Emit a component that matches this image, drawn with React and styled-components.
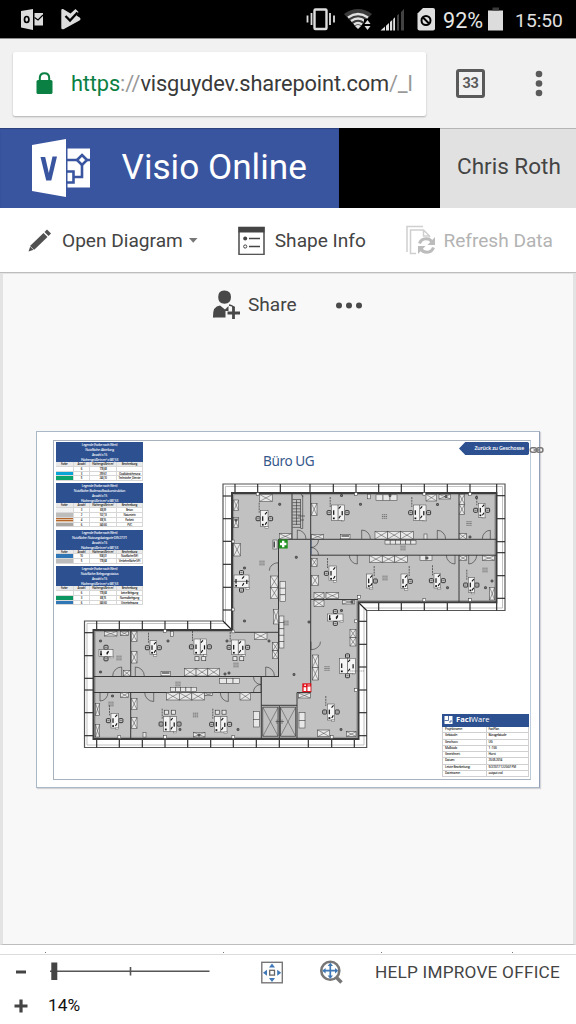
import React from 'react';
import styled, { createGlobalStyle } from 'styled-components';

const Global = createGlobalStyle`
  * { box-sizing: border-box; }
  body { margin: 0; background: #fff; overflow: hidden; }
`;

const Screen = styled.div`
  width: 576px;
  height: 1024px;
  display: flex;
  flex-direction: column;
  overflow: hidden;
  font-family: Roboto, "Liberation Sans", sans-serif;
  background: #fff;
`;

const Label = styled.span`
  font-size: ${(p) => p.$size}px;
  line-height: 1;
  letter-spacing: ${(p) => p.$track || 0}px;
  color: ${(p) => p.$color || '#444'};
  margin-left: ${(p) => p.$gap || 0}px;
  padding-top: ${(p) => p.$drop || 0}px;
  white-space: nowrap;
`;

const Icon = styled.svg`
  display: block;
  flex: none;
  margin-left: ${(p) => p.$gap || 0}px;
`;

const StatusBar = styled.header`
  height: 38px;
  flex: none;
  background: #000;
  display: flex;
  align-items: center;
  padding-left: 20px;
`;

const BrowserBar = styled.div`
  height: 90px;
  flex: none;
  background: #f1f1f1;
  border-top: 1px solid #8d8d8d;
  display: flex;
  align-items: center;
  padding: 0 0 0 13px;
`;

const Address = styled.div`
  width: 413px;
  height: 64px;
  background: #fff;
  border-radius: 2px;
  box-shadow: 0 1px 2px rgba(0, 0, 0, 0.28);
  display: flex;
  align-items: center;
  padding-left: 23px;
`;

const Url = styled.span`
  font-size: 21.8px;
  line-height: 1;
  letter-spacing: -0.15px;
  margin-left: 18px;
  color: #3a3a3a;
  white-space: nowrap;
  b { font-weight: 400; color: #0b8043; }
  i { font-style: normal; color: #999; }
`;

const Tabs = styled.div`
  width: 29px;
  height: 29px;
  margin-left: 30px;
  border: 3px solid #5a5a5a;
  border-radius: 3px;
  display: flex;
  align-items: center;
  justify-content: center;
  font-size: 14.5px;
  font-weight: 700;
  letter-spacing: -0.4px;
  color: #5a5a5a;
`;

const AppBar = styled.div`
  height: 80px;
  flex: none;
  display: flex;
`;

const Brand = styled.div`
  width: 339px;
  background: #3955a0;
  box-shadow: inset 0 1px 1px #2b417c;
  display: flex;
  align-items: center;
  padding: 0 0 0 32px;
`;

const Redacted = styled.div`
  width: 101px;
  background: #000;
`;

const User = styled.div`
  flex: 1;
  background: #e1e1e1;
  box-shadow: inset 0 1px 0 #b4b4b4;
  display: flex;
  align-items: center;
  padding: 0 0 4px 17px;
`;

const CommandBar = styled.nav`
  height: 65px;
  flex: none;
  background: #fff;
  border-bottom: 1px solid #bdbdbd;
  display: flex;
  align-items: center;
  padding-left: 28px;
`;

const Canvas = styled.main`
  height: 672px;
  flex: none;
  background: #f8f8f8;
  border: solid #e3e3e3;
  border-width: 1px 3px;
  border-bottom: 1px solid #bdbdbd;
  display: flex;
  flex-direction: column;
`;

const ShareRow = styled.div`
  height: 62px;
  flex: none;
  display: flex;
  align-items: center;
  padding-left: 209px;
`;

const Paper = styled.section`
  position: relative;
  width: 504px;
  height: 357px;
  flex: none;
  margin: 95px 0 0 33px;
  background: #fff;
  border: 1px solid #a9b7c6;
  border-right-color: #8fa0b8;
  box-shadow: 1px 1px 1px #d4d4d8;
  padding: 8px 8px 7px 16px;
`;

const Frame = styled.div`
  height: 100%;
  border: 1px solid #a7b2bd;
  border-right-color: #bccbdd;
  display: flex;
  justify-content: space-between;
  padding: 1px 1px 2px 2px;
`;

const Plan = styled.svg`
  position: absolute;
  left: -1px;
  top: -1px;
  overflow: visible;
`;

const PlanTitle = styled.h1`
  position: absolute;
  left: 226px;
  top: 20px;
  margin: 0;
  font: 400 13.6px/18px "Noto Sans", "Open Sans", sans-serif;
  letter-spacing: -0.4px;
  color: #35588c;
  white-space: nowrap;
`;

const Legends = styled.div`
  display: flex;
  flex-direction: column;
  gap: 2.2px;
  width: 87px;
  font-family: "Open Sans", sans-serif;
`;

const LegendHead = styled.div`
  background: #2d5190;
  color: #f0f4fb;
  height: 20px;
  font-size: 3.3px;
  font-weight: 600;
  letter-spacing: -0.28px;
  line-height: 5px;
  text-align: center;
  white-space: nowrap;
`;

const LegendRow = styled.div`
  display: grid;
  grid-template-columns: 17.5px 16.7px 26.7px 1fr;
  height: 4.8px;
  font-size: 2.9px;
  font-weight: 600;
  letter-spacing: -0.3px;
  line-height: 4.4px;
  text-align: center;
  color: #222;
  background: ${(p) => (p.$head ? '#e9e9e9' : '#fff')};
  border-bottom: 0.5px solid #d7d7d7;
  span { border-right: 0.5px solid #d7d7d7; white-space: nowrap; overflow: hidden; }
`;

const Swatch = styled.span`
  background: ${(p) => p.$fill || '#fff'};
`;

const RightCol = styled.div`
  display: flex;
  flex-direction: column;
  justify-content: space-between;
  align-items: flex-end;
`;

const BackLink = styled.div`
  width: 70px;
  height: 13px;
  background: #2d5190;
  color: #fff;
  clip-path: polygon(0 50%, 9% 0, 98% 0, 100% 8%, 100% 92%, 98% 100%, 9% 100%);
  font: 600 5.3px/13px "Open Sans", sans-serif;
  letter-spacing: -0.2px;
  text-align: right;
  padding-right: 5px;
`;

const InfoBlock = styled.div`
  width: 87px;
  font-family: "Open Sans", sans-serif;
`;

const InfoHead = styled.div`
  height: 12.8px;
  background: #2d5190;
  color: #fff;
  display: flex;
  align-items: center;
  padding: 0 0 1px 2px;
  font-size: 7.6px;
  line-height: 1;
  b { margin-left: 3px; }
`;

const InfoRow = styled.div`
  display: grid;
  grid-template-columns: 1fr 1fr;
  height: 6.25px;
  border: 0.5px solid #d0d0d0;
  border-top: 0;
  font-size: 3.1px;
  font-weight: 600;
  letter-spacing: -0.22px;
  line-height: 5.6px;
  color: #222;
  span { padding-left: 2px; white-space: nowrap; }
  span + span { border-left: 0.5px solid #d0d0d0; }
`;

const RulerStrip = styled.div`
  height: 10px;
  flex: none;
  border-bottom: 1px solid #dcdcdc;
  display: flex;
  align-items: flex-end;
  padding-bottom: 1px;
`;

const Mark = styled.i`
  width: 1px;
  height: 1px;
  background: #777;
  margin-left: ${(p) => p.$gap}px;
`;

const Footer = styled.footer`
  flex: 1;
  display: flex;
  flex-direction: column;
`;

const FooterRow = styled.div`
  height: ${(p) => p.$h}px;
  display: flex;
  align-items: center;
  padding-left: 14px;
`;

/* ---------- floor plan ---------- */

const range = (n) => Array.from({ length: n }, (_, i) => i);

const Cabinet = ({ b: [x, y, w, h, n = 1, plain = 0] }) => {
  const vertical = h > w;
  const cw = vertical ? w : w / n;
  const ch = vertical ? h / n : h;
  return range(n).map((i) => {
    const cx = vertical ? x : x + i * cw;
    const cy = vertical ? y + i * ch : y;
    return (
      <g key={i}>
        <rect x={cx} y={cy} width={cw} height={ch} fill="#e8e8e8" stroke="#444" strokeWidth=".55" />
        {!plain && (
          <path d={`M${cx} ${cy}l${cw} ${ch}M${cx + cw} ${cy}l${-cw} ${ch}`} stroke="#444" strokeWidth=".5" />
        )}
      </g>
    );
  });
};

const Chair = ({ x, y }) => (
  <g>
    <rect x={x - 2} y={y - 2} width="4" height="4" rx=".8" fill="#ccc" stroke="#222" strokeWidth=".9" />
    <path d={`M${x - 1} ${y}h2`} stroke="#333" strokeWidth=".6" />
  </g>
);

const Desk = ({ d: [x, y, w, h, chairs] }) => {
  const cx = x + w / 2;
  const cy = y + h / 2;
  const wide = w > 10 && h > 10;
  return (
    <g>
      {chairs.includes('L') && <Chair x={x - 2.6} y={cy} />}
      {chairs.includes('R') && <Chair x={x + w + 2.6} y={cy} />}
      {chairs.includes('T') && <Chair x={cx} y={y - 2.4} />}
      {chairs.includes('B') && <Chair x={cx} y={y + h + 2.4} />}
      {chairs.includes('b') && [-3.4, 3.4].map((o) => (
        <rect key={o} x={cx + o - 2} y={y + h + 2} width="4" height="4" fill="#e8e8e8" stroke="#333" strokeWidth=".6" />
      ))}
      {chairs.includes('t') && [-3.4, 3.4].map((o) => (
        <rect key={o} x={cx + o - 2} y={y - 6.5} width="4" height="4" fill="#e8e8e8" stroke="#333" strokeWidth=".6" />
      ))}
      {(chairs.includes('L') || chairs.includes('R')) && (
        <path
          d={`M${chairs.includes('L') ? x - 1.5 : x + w + 1.5} ${y - 8}v10`}
          stroke="#333" strokeWidth=".7" strokeDasharray="2 .8"
        />
      )}
      <rect x={x} y={y} width={w} height={h} fill="#f4f4f4" stroke="#444" strokeWidth=".5" />
      {wide && h > w - 1 && <path d={`M${cx} ${y}v${h}`} stroke="#333" strokeWidth=".6" />}
      {wide && h <= w - 1 && <path d={`M${x} ${cy}h${w}`} stroke="#333" strokeWidth=".6" />}
      <rect x={x + 1.4} y={cy - 2.4} width="1.2" height="4.6" fill="#111" />
      <path d={`M${cx + 0.6} ${y + 3.6}l2-2.2M${cx + 0.8} ${y + h - 2}l1.6-2.6`} stroke="#111" strokeWidth="1.1" />
      {wide && <rect x={x + w - 2.8} y={cy - 1.6} width="1.2" height="4.2" fill="#111" />}
      <rect x={x + 1.2} y={y + h - 2.8} width="1.8" height="1.7" fill="#111" />
      <rect x={x + w - 3} y={y + h} width="3.2" height="1.5" fill="#eee" stroke="#555" strokeWidth=".4" />
    </g>
  );
};

const Door = ({ d: [x, y, dx, dy] }) => (
  <path
    d={`M${x} ${y}v${dy}A${Math.abs(dx)} ${Math.abs(dy)} 0 0 ${dx * dy < 0 ? 1 : 0} ${x + dx} ${y}`}
    fill="none" stroke="#333" strokeWidth=".6"
  />
);

const cabinets = [
  [259.3, 494.3, 13.3, 7.3], [233.7, 500, 5, 10.7], [233.7, 517.3, 4.6, 10], [233.7, 543.3, 6.7, 12.7],
  [279.3, 533.7, 12, 5.3], [270.7, 576, 7.3, 22.7, 2], [273.3, 609.3, 5.3, 14.7], [311.3, 503.3, 5.7, 12],
  [311.7, 534.3, 12, 4.7], [311.7, 558.3, 5.4, 8], [311.7, 575.3, 6.7, 10.3], [314, 592.7, 10, 6],
  [326, 592.7, 12.7, 6], [314, 600, 10, 6.7], [342.7, 600, 12, 4], [369.7, 555.7, 37.6, 6.8, 3],
  [376, 494.8, 21, 5.6, 3, 1], [375, 531.3, 38.3, 7.7, 3], [426, 494.3, 10.7, 6.7], [439, 494.3, 11.7, 4.7],
  [459.3, 494.3, 5.3, 20, 2], [459.3, 533.7, 7, 5.3], [420, 555.7, 12, 4.7, 2, 1], [459.3, 555.7, 7.3, 4.7],
  [482.7, 555.7, 12, 4.7], [489.7, 587.3, 5, 12.7], [385, 540.3, 31, 3.8, 6, 1],
  [104.3, 631.3, 12.7, 4.7], [120.3, 631.3, 8, 4], [131.3, 631.3, 5.7, 10], [131.3, 651.7, 5.7, 11.3],
  [123.3, 670.3, 7, 5.7], [184.3, 668.3, 35.3, 7.7, 3], [120.7, 692.7, 7.7, 4.7], [166.7, 692.7, 37.7, 7.3, 3],
  [204.4, 692.7, 8, 3], [95.4, 703.3, 4.3, 12], [95.4, 724.3, 4.3, 12.7], [131.3, 698.3, 5.7, 11.3],
  [131.3, 717.7, 5.7, 10.7], [193.3, 732.3, 11.7, 4.7], [170.3, 687.3, 26, 4.3, 5, 1],
  [254.3, 632.7, 12.7, 6.7], [272.7, 642.7, 5.3, 16, 2], [279.2, 616, 4.7, 32, 5, 1],
  [350, 629.3, 6, 16.7, 2], [312.3, 655, 6, 25, 2], [298.3, 693, 12, 5], [299, 712.7, 6, 15.3, 2, 1],
  [253.3, 711.7, 6, 15.3, 2, 1], [240, 692.7, 10.7, 7.3], [317.7, 730, 12, 6.7], [346.7, 731.7, 9.3, 4.7],
  [219.7, 678.4, 20, 5, 3, 1], [280, 581.5, 5.6, 20, 3, 1], [272.9, 540, 4.2, 9, 1, 1],
  [367.5, 494.3, 3, 4.5, 1, 1], [424, 534, 3, 5, 1, 1], [143, 732.5, 3, 4.6, 1, 1], [170.4, 631.5, 3, 5, 1, 1],
];

const desks = [
  [260.7, 510.7, 7.3, 16, 'LR'], [331.7, 505, 12.7, 15.3, 'LR'], [329, 566, 7.3, 14.7, 'L'],
  [366.7, 574, 6, 14, 'R'], [234, 575, 15, 12.7, 'TB'], [327.7, 614, 15.3, 7, 'TB'],
  [413.3, 505, 12.7, 15.3, 'LR'], [478.3, 503.3, 6.7, 14, 'LR'], [401, 574, 6.7, 14.7, 'R'],
  [434, 573.3, 6.7, 14.7, 'LR'], [468.3, 577.7, 6, 14.7, 'LR'], [99, 649.7, 14, 6.7, 'TB'],
  [150, 640.7, 6.7, 14, 'LR'], [194, 639, 12.7, 15.7, 'LRb'], [111, 713.3, 7.3, 14.7, 'LR'],
  [163.7, 716.7, 12.7, 14.7, 'LRt'], [214.3, 716.7, 12.7, 15.3, 'LRt'], [231.7, 640, 13.3, 14.7, 'LRb'],
  [339.7, 658.3, 15.6, 15, 'TB'], [327.3, 704, 7.3, 16, 'LR'],
];

const doors = [
  [297.3, 539, 8.7, -9], [361.7, 539, 8.7, -9], [357.3, 555, -8, 9], [278.3, 570.7, -9, -8],
  [437.3, 539, 8.3, -8.7], [490.3, 539, -8, -8.7], [455, 555, -8.7, 9], [468.7, 555, 8, 9],
  [121.7, 676, -9, -9], [135.3, 676, 9, -9], [100, 692.5, 8, 8.5], [153.7, 692.5, -9, 9],
  [228.3, 692.5, -8, 9], [265.7, 676, 8.7, -9], [261, 677, -7.5, 7.5], [261, 692, -7.5, -7.5],
  [311, 540, 7.5, 7.5], [311, 555, 7.5, -7.5], [311, 641.7, 9.5, 8],
];

const topTicks = [235, 257.7, 280.3, 310, 333.3, 356, 378.7, 401.3, 424.3, 447.3, 470, 496.7];
const rightTicks = [495.7, 518.7, 541.7, 552.7, 575.7, 598.3];
const leftTicks = [496, 518.7, 541.3, 564.3, 587.3, 610];
const wingTopTicks = [96.7, 119.3, 142.3, 165, 187.7, 210.7];
const wingLeftTicks = [632.7, 655.7, 678.3, 690, 712.7, 735.7];
const wingBottomTicks = [...wingTopTicks, 233.3, 256.3, 279.3, 308.3, 331.7, 354.3];
const innerRightTicks = [621.3, 644.3, 667, 690, 712.7, 735.7];
const columns = [
  [257.7, 494], [356, 494], [424.3, 494], [470, 494], [424.3, 600], [470, 600], [233.3, 541.5], [233.3, 609.5],
  [165, 631], [119.3, 737], [165, 737], [233.3, 737], [331.7, 737], [356, 621.3], [356, 690], [233.3, 631.5], [359, 597],
];
const notes = [
  [262, 563], [384.5, 516.5], [385, 578], [485, 570], [119, 658], [111, 704], [195.5, 715], [178, 684],
  [327, 668.5], [286, 623], [469, 523.5], [403, 548], [236, 665],
];
const fixtures = [
  [279.7, 504.3], [360.5, 504.3], [437.5, 504.5], [476.5, 497.5], [296.3, 557.3], [309, 622], [294, 674.5],
  [447.5, 587.7], [485.5, 587.7], [492, 581], [168, 641], [227, 641], [244.5, 621], [269, 641], [100.5, 641],
  [100.5, 672], [112.5, 696], [341, 729.5], [238, 729.5], [180, 729.5], [341.5, 610.5], [244.5, 568],
  [390, 495.5], [341.5, 495.5], [446, 496.5], [427, 558], [225, 674], [229, 673], [236, 520], [199, 735], [470, 537], [352, 602],
];

const FloorPlan = () => (
  <Plan width="504" height="357" viewBox="36 431 504 357">
    <path
      d="M223 484H505V610.500H366.700V747.500H84.500V621H223Z"
      fill="#fff" stroke="#555" strokeWidth="1.2"
    />
    <path
      d="M225.500 486.500H502.500M502.500 486.500V608M364 608H502.500M364 608V745M87 745H364M87 623.500V745M87 623.500H225.500M225.500 486.500V623.500"
      stroke="#999" strokeWidth=".6" fill="none"
    />
    <g stroke="#222" strokeWidth="1.1">
      {topTicks.map((x) => <path key={x} d={`M${x} 484V492`} />)}
      {topTicks.slice(6).map((x) => <path key={x} d={`M${x} 603V610.500`} />)}
      {rightTicks.map((y) => <path key={y} d={`M497 ${y}H505`} />)}
      {leftTicks.map((y) => <path key={y} d={`M223 ${y}H231`} />)}
      {wingTopTicks.map((x) => <path key={x} d={`M${x} 621V629`} />)}
      {wingLeftTicks.map((y) => <path key={y} d={`M84.500 ${y}H93`} />)}
      {wingBottomTicks.map((x) => <path key={x} d={`M${x} 740V747.500`} />)}
      {innerRightTicks.map((y) => <path key={y} d={`M359 ${y}H366.700`} />)}
      <path d="M223 621L231 629M359 603L366.700 610.500" />
    </g>
    <path
      d="M232 493H496.500V602.300H358.500V739H93.500V630H232Z"
      fill="#c1c1c1" stroke="#3c3c3c" strokeWidth="2"
    />
    <path
      d="M233.600 494.600H494.900V600.700H356.900V737.400H95.100V631.600H233.600Z"
      fill="none" stroke="#777" strokeWidth=".6"
    />
    <path
      d="M292 493V539.300M310.700 493V692.500M278.500 539.300H310.700M310.700 539.300H496M310.700 555.200H496M278.500 539.300V677M310.700 599.500H358M459 493V539.300M459 555.200V602M233 632.300H278.500M94 676.500H278.500M94 692.500H261.300M130.700 630V676.500M130.700 692.500V739M261.300 676.500V739M297 692.500V739M297 692.500H310.700M261.300 705.300H297M279.300 706V739"
      fill="none" stroke="#383838" strokeWidth="1"
    />
    <path d="M311.200 540.500V554.500" stroke="#5f7fae" strokeWidth=".8" />
    {/* stairs */}
    <g stroke="#333" strokeWidth=".6" fill="none">
      {range(10).map((i) => <path key={i} d={`M292.500 ${499.5 + i * 3.1}H300.500`} />)}
      <path d="M300.500 499V528M302.700 495V528.500M296.500 500V525M298 516H305M300 520H304M301 494L303 497M300.500 528.500H302.700" />
    </g>
    {/* lift shafts */}
    <g stroke="#333" fill="none">
      <path d="M262.700 707.200H278V736.300H262.700ZM280.500 707.200H295.600V736.300H280.500Z" strokeWidth=".7" />
      <path d="M263 707.500L278 736M278 707.500L263 736M280.500 707.500L295.500 736M295.500 707.500L280.500 736" strokeWidth=".45" />
      <path d="M275.500 721.500H284M277 719.500V724M282 719.500V724" strokeWidth=".5" />
    </g>
    {doors.map((d, i) => <Door key={i} d={d} />)}
    {cabinets.map((b, i) => <Cabinet key={i} b={b} />)}
    {desks.map((d, i) => <Desk key={i} d={d} />)}
    {columns.map(([x, y], i) => (
      <rect key={i} x={x - 1.4} y={y - 1.4} width="2.8" height="2.8" fill="#fff" stroke="#333" strokeWidth=".5" />
    ))}
    {notes.map(([x, y], i) => (
      <path
        key={i} d={`M${x - 2.6} ${y - 1.8}h5.200M${x - 2.6} ${y}h5.200M${x - 2.6} ${y + 1.8}h5.200`}
        stroke="#555" strokeWidth=".7" strokeDasharray="1.4 .5"
      />
    ))}
    {fixtures.map(([x, y], i) => (
      <rect key={i} x={x - 1} y={y - 1} width="2" height="2" rx=".4" fill="#777" stroke="#222" strokeWidth=".6" />
    ))}
    {[[161, 671.5], [340.5, 534.5]].map(([x, y]) => (
      <g key={x}>
        <rect x={x} y={y} width="9.500" height="4.300" fill="#eee" stroke="#333" strokeWidth=".5" />
        <path d={`M${x + 1} ${y + 1.5}h7.500`} stroke="#222" strokeWidth="1.100" />
      </g>
    ))}
    <path d="M274.200 541.500V547.500" stroke="#222" strokeWidth="1.200" />
    <path d="M350 671H364" stroke="#555" strokeWidth=".5" strokeDasharray="1.500 .6" />
    {/* first aid point */}
    <rect x="278.700" y="539.500" width="9" height="9" fill="#1c8f1c" />
    <path d="M283.200 540.800V547.200M280 544H286.400" stroke="#fff" strokeWidth="2.400" />
    {/* fire extinguisher */}
    <rect x="302.300" y="683.300" width="9" height="8.800" fill="#e0121b" />
    <path d="M304.300 684.500h1.600v1.600h-1.600ZM303.600 687.300h2.600v3.600h-2.600ZM307.500 686.600h3v4.300h-3Z" fill="#fff" />
    <path d="M307.500 685h2.500" stroke="#fff" strokeWidth=".7" />
    {/* hyperlink marker */}
    <g fill="none" stroke="#777" strokeWidth="1.500">
      <rect x="530.300" y="447.700" width="6.300" height="4.600" rx="2" />
      <rect x="536.600" y="447.700" width="6.300" height="4.600" rx="2" />
      <path d="M533.500 450h6.500" />
    </g>
  </Plan>
);

const wood = 'repeating-linear-gradient(#b5652b 0 1.2px, #e2c3a4 1.2px 2px)';
const legends = [
  ['Abteilung', [['', '6', '178,68', ''], ['#0aa5d6', '3', '259,61', 'Qualitätssicherung'], ['#0ca36c', '5', '240,10', 'Technische_Dienste']]],
  ['Bodenaufbaukonstruktion', [['#f1f1f1', '3', '88,39', 'Beton'], ['#bdbdbd', '2', '102,13', 'Naturstein'], [wood, '4', '88,16', 'Parkett'], ['#a9a5a2', '6', '340,60', 'PVC']]],
  ['Nutzungskategorie DIN 277/1', [['#2f76b6', '10', '508,01', 'Nutzfläche (NF)'], ['#bcbcbc', '5', '178,68', 'Verkehrsfläche (VF)']]],
  ['Belegungsstatus', [['', '6', '178,68', 'keine Belegung'], ['#0b9560', '3', '88,15', 'Normalbelegung'], ['#2f76b6', '6', '340,60', 'Unterbelegung']]],
];

const info = [
  ['Projektname:', 'FaciPlan'], ['Gebäude:', 'Bürogebäude'], ['Geschoss:', 'UG'], ['Maßstab:', '1 : 100'],
  ['Gezeichnet:', 'Horst'], ['Datum:', '20.05.2014'], ['Letzte Bearbeitung:', '5/2/2017 12:20:07 PM'], ['Dateiname:', 'output.vsd'],
];

export default function App() {
  return (
    <Screen>
      <Global />
      <StatusBar>
        <Icon width="24" height="22" viewBox="20 8 24 22">
          <path d="M21 11L33 9V30L21 27.500Z" fill="#dcdcdc" />
          <path d="M34.500 13H43V25.500H34.500Z" fill="#dcdcdc" />
          <path d="M34.500 17.500L38 20L43 15" fill="none" stroke="#000" strokeWidth="1.200" />
          <ellipse cx="26.700" cy="19.500" rx="2.200" ry="3" fill="none" stroke="#000" strokeWidth="1.700" />
        </Icon>
        <Icon $gap={16} width="22" height="22" viewBox="60 8 22 22">
          <path d="M61.300 10Q61.500 8.500 63 9L70.500 13.500L75.500 9L78.500 12L76.500 15.500L80 17.800Q81.500 19.300 79.500 20.500L64 29Q61.500 30 61.300 28Z" fill="#dcdcdc" />
          <path d="M65.500 16L70 20.500L77.500 12.500" fill="none" stroke="#000" strokeWidth="2.300" />
        </Icon>
        <Icon $gap={223} width="30" height="24" viewBox="305 7 30 24">
          <rect x="314.500" y="9.500" width="12" height="19.500" rx="1" fill="none" stroke="#ddd" strokeWidth="2.400" />
          <path d="M311.500 13V25M307.500 15.500V22.500M330 13V25M334 15.500V22.500" stroke="#ddd" strokeWidth="1.800" />
        </Icon>
        <Icon $gap={8} width="32" height="24" viewBox="343 7 32 24">
          <path d="M358 29L344 14Q358 4 372 14Z" fill="#3b3b3b" />
          <g fill="none" stroke="#e0e0e0" strokeWidth="2.300">
            <path d="M348 17.500Q358 10.500 368 17.500" />
            <path d="M351 21Q358 16 365 21" />
            <path d="M354 24.500Q358 21.500 362 24.500" />
          </g>
          <path d="M358 29L355 26Q358 24 361 26Z" fill="#e0e0e0" />
          <path d="M364 19H371V31H364Z" fill="#000" />
          <path d="M367.500 20L370.500 24H364.500ZM367.500 30L370.500 26H364.500Z" fill="#e0e0e0" />
        </Icon>
        <Icon $gap={5} width="26" height="24" viewBox="380 7 26 24">
          <path d="M380.500 30.500L385 26.500V30.500ZM386 25.700L389 22.900V30.500H386ZM390 22L392.200 20V30.500H390ZM393.200 19L395 17.300V30.500H393.200Z" fill="#e0e0e0" />
          <path d="M397 15.600L399 13.700V30.500H397ZM401 11.900L404 9V30.500H401Z" fill="#424242" />
        </Icon>
        <Icon $gap={11} width="19" height="24" viewBox="417 7 19 24">
          <path d="M423 8H433Q435 8 435 10V28.500Q435 30.500 433 30.500H419.500Q417.500 30.500 417.500 28.500V13.500Z" fill="#dedede" />
          <circle cx="426" cy="20.500" r="4.500" fill="none" stroke="#000" strokeWidth="2" />
          <path d="M423 17.500L429 23.500" stroke="#000" strokeWidth="2" />
        </Icon>
        <Label $size={21.6} $color="#e6e6e6" $gap={7} $drop={3}>92%</Label>
        <Icon $gap={5} width="16" height="24" viewBox="489 7 16 24">
          <path d="M489 10.500H504V30.500H489Z" fill="#dcdcdc" />
          <path d="M493.500 7.500H500V10.500H493.500Z" fill="#3a3a3a" />
        </Icon>
        <Label $size={19.2} $color="#e0e0e0" $gap={11} $drop={3}>15:50</Label>
      </StatusBar>

      <BrowserBar>
        <Address>
          <Icon width="17" height="23" viewBox="0 0 17 23">
            <path d="M3.800 9V6Q3.800 1.200 8.500 1.200T13.200 6V9" fill="none" stroke="#0b8043" strokeWidth="2" />
            <rect x=".5" y="8" width="16" height="14" rx="1.600" fill="#0b8043" />
          </Icon>
          <Url><b>https</b><i>://</i>visguydev.sharepoint.com<i>/_l</i></Url>
        </Address>
        <Tabs>33</Tabs>
        <Icon $gap={50} width="8" height="28" viewBox="0 0 8 28">
          {[4, 13.5, 23].map((y) => <circle key={y} cx="4" cy={y} r="3.300" fill="#5a5a5a" />)}
        </Icon>
      </BrowserBar>

      <AppBar>
        <Brand>
          <Icon width="58" height="58" viewBox="32 139 58 58">
            <path d="M32 145L66 139V197L32 191Z" fill="#fff" />
            <path d="M67.500 148.500H90V187.500H67.500Z" fill="#fff" />
            <path d="M40.500 157H45.200L48.800 173L52.500 156.500H57L51.300 180.500H46.200Z" fill="#3955a0" />
            <g fill="none" stroke="#3955a0" strokeWidth="2.600">
              <path d="M67 160H77M82 165V177H73M67 171.500H73.500V182.500H67M87 160H90" />
              <path d="M82 155L87 160L82 165L77 160Z" />
            </g>
          </Icon>
          <Label $size={35.2} $color="#fff" $gap={31.5}><span>Visio Online</span></Label>
        </Brand>
        <Redacted />
        <User><Label $size={22.5}>Chris Roth</Label></User>
      </AppBar>

      <CommandBar>
        <Icon width="24" height="24" viewBox="28 228 24 24">
          <path d="M28.500 251.500L30.500 245.500L43.500 233L47.500 237L34.500 249.500Z" fill="#505050" />
          <path d="M44.500 232L47 229.500L51 233.500L48.500 236Z" fill="#505050" />
          <path d="M29.800 246L34 250" stroke="#ddd" strokeWidth=".8" />
        </Icon>
        <Label $size={19.1} $gap={10} $drop={1}>Open Diagram</Label>
        <Icon $gap={6} width="9" height="5" viewBox="0 0 9 5"><path d="M0 0H8.500L4.250 4.800Z" fill="#777" /></Icon>
        <Icon $gap={40.5} width="27" height="29" viewBox="238 225 27 29">
          <rect x="239" y="226.500" width="25" height="27" fill="#fff" stroke="#555" strokeWidth="1.600" />
          <path d="M238.500 226H264.500V231.500H238.500Z" fill="#444" />
          <path d="M249 237.500H260M249 245.500H260" stroke="#444" strokeWidth="1.500" />
          <circle cx="245.200" cy="237.500" r="2" fill="#444" />
          <circle cx="245.200" cy="245.500" r="1.600" fill="none" stroke="#444" strokeWidth="1" />
        </Icon>
        <Label $size={19.1} $gap={9.5} $drop={1}>Shape Info</Label>
        <Icon $gap={39.5} width="31" height="30" viewBox="405 225 31 30">
          <g fill="none" stroke="#cfcfcf" strokeWidth="1.500">
            <path d="M407 252V226.500H423" />
            <path d="M416 253.500H410.500V230H423.500L429.500 236V237.500M423.500 230V236H429.500" />
          </g>
          <g fill="none" stroke="#bcbcbc" strokeWidth="3">
            <path d="M419.500 243.500Q421 239 426 238.800Q430 238.700 432 242" />
            <path d="M433.500 247.500Q432 252 427 252.200Q422.500 252.200 421 249" />
          </g>
          <path d="M435 237V245H427.500ZM418 254V246H425.500Z" fill="#bcbcbc" />
        </Icon>
        <Label $size={19.1} $gap={7} $drop={1} $color="#b3b3b3">Refresh Data</Label>
      </CommandBar>

      <Canvas>
        <ShareRow>
          <Icon width="28" height="30" viewBox="212 289 28 30">
            <path d="M224.500 289.500Q231 289.500 231 296T224.500 302.800Q218.200 302.800 218.200 296T224.500 289.500Z" fill="#484848" />
            <path d="M213 316Q212.500 305 220 304.500L225 308.500L228.500 305V310H225.500V316.500H215Q213 317 213 316Z" fill="#484848" />
            <path d="M229 304Q233 304.500 234 307" stroke="#484848" strokeWidth="1.500" fill="none" />
            <path d="M233.500 305.500V318M227.500 312H240" stroke="#484848" strokeWidth="2.800" />
          </Icon>
          <Label $size={19.1} $gap={8}>Share</Label>
          <Icon $gap={38.5} width="28" height="8" viewBox="0 0 28 8">
            {[4, 14, 24].map((x) => <circle key={x} cx={x} cy="4.500" r="3" fill="#4a4a4a" />)}
          </Icon>
        </ShareRow>
        <Paper>
          <Frame>
            <Legends>
              {legends.map(([name, rows]) => (
                <div key={name}>
                  <LegendHead>
                    <div>Legende (Farbe nach Wert)</div>
                    <div>Nutzfläche: {name}</div>
                    <div>Anzahl = 15</div>
                    <div>Flächengröße in m² = 687,53</div>
                  </LegendHead>
                  <LegendRow $head>
                    <span>Farbe</span><span>Anzahl</span><span>Flächengröße in m²</span><span>Beschreibung</span>
                  </LegendRow>
                  {rows.map(([fill, ...cells], r) => (
                    <LegendRow key={r}>
                      <Swatch $fill={fill} />
                      {cells.map((c, k) => <span key={k}>{c}</span>)}
                    </LegendRow>
                  ))}
                </div>
              ))}
            </Legends>
            <RightCol>
              <BackLink>Zurück zu Geschosse</BackLink>
              <InfoBlock>
                <InfoHead>
                  <Icon width="9" height="8" viewBox="0 0 8 8">
                    <rect width="8" height="8" fill="#fff" />
                    <path d="M4 0V4.500H0M4.500 6H6.500V4" stroke="#2d5190" strokeWidth=".8" fill="none" />
                  </Icon>
                  <b>Faci</b>Ware
                </InfoHead>
                {info.map(([k, v]) => <InfoRow key={k}><span>{k}</span><span>{v}</span></InfoRow>)}
              </InfoBlock>
            </RightCol>
          </Frame>
          <PlanTitle>Büro UG</PlanTitle>
          <FloorPlan />
        </Paper>
      </Canvas>

      <RulerStrip>
        <Mark $gap={45} /><Mark $gap={177} /><Mark $gap={157} /><Mark $gap={130} />
      </RulerStrip>
      <Footer>
        <FooterRow $h={34}>
          <Icon width="196" height="20" viewBox="14 961 196 20">
            <path d="M16 971H26" stroke="#444" strokeWidth="3" />
            <path d="M50 970.300H209.500" stroke="#555" strokeWidth="1.600" />
            <path d="M130.500 966V974.500" stroke="#555" strokeWidth="1.600" />
            <rect x="51.300" y="961.500" width="6" height="17.500" fill="#444" />
          </Icon>
          <Icon $gap={51} width="22" height="23" viewBox="261 961 22 23">
            <rect x="261.800" y="962.300" width="20.500" height="20.500" fill="#fff" stroke="#777" strokeWidth="1.400" />
            <rect x="269.700" y="970.300" width="4.800" height="4.800" fill="none" stroke="#666" strokeWidth="1.300" />
            <path d="M272 963.500L275 967.500H269ZM272 982L275 978H269ZM263 972.700L267 969.700V975.700ZM281.200 972.700L277.200 969.700V975.700Z" fill="#3f78b5" />
          </Icon>
          <Icon $gap={37} width="23" height="24" viewBox="320 961 23 24">
            <circle cx="330.300" cy="971.700" r="9" fill="#fff" stroke="#777" strokeWidth="2.600" />
            <path d="M336.500 978.500L341.500 983.500" stroke="#777" strokeWidth="3.500" />
            <path d="M330.300 965V978.500M323.500 971.700H337" stroke="#3f78b5" strokeWidth="1.700" />
            <path d="M330.300 963.700L333 967H327.600ZM330.300 979.700L333 976.400H327.600ZM322.300 971.700L325.600 969V974.400ZM338.300 971.700L335 969V974.400Z" fill="#3f78b5" />
          </Icon>
          <Label $size={17.2} $gap={32} $track={0.23} $drop={1}>HELP IMPROVE OFFICE</Label>
        </FooterRow>
        <FooterRow $h={34}>
          <Icon width="14" height="14" viewBox="0 0 14 14">
            <path d="M7 .5V13.500M.5 7H13.500" stroke="#444" strokeWidth="3.200" />
          </Icon>
          <Label $size={17.3} $gap={20} $color="#111">14%</Label>
        </FooterRow>
      </Footer>
    </Screen>
  );
}
